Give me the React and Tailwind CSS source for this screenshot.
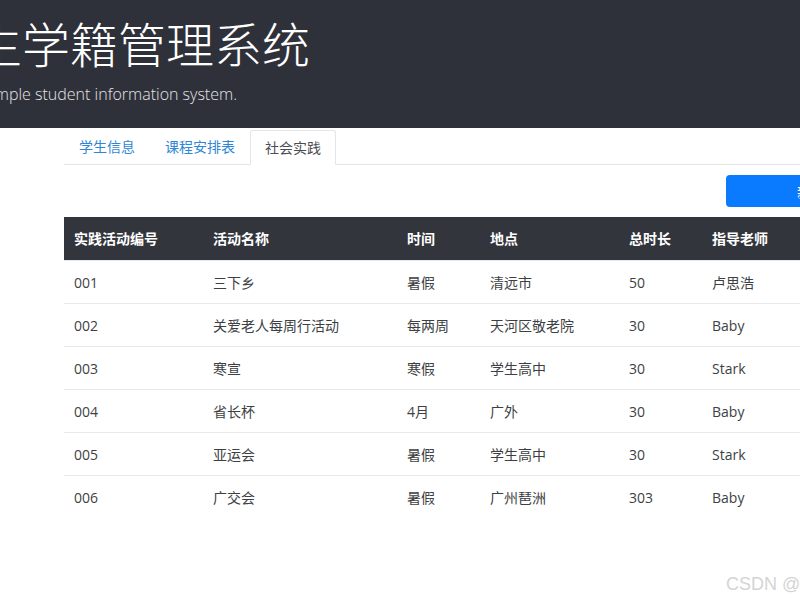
import React from 'react';

const rows = [
  ['001', '三下乡', '暑假', '清远市', '50', '卢思浩'],
  ['002', '关爱老人每周行活动', '每两周', '天河区敬老院', '30', 'Baby'],
  ['003', '寒宣', '寒假', '学生高中', '30', 'Stark'],
  ['004', '省长杯', '4月', '广外', '30', 'Baby'],
  ['005', '亚运会', '暑假', '学生高中', '30', 'Stark'],
  ['006', '广交会', '暑假', '广州琶洲', '303', 'Baby'],
];

const heads = ['实践活动编号', '活动名称', '时间', '地点', '总时长', '指导老师'];
const widths = ['w-[139px]', 'w-[194px]', 'w-[83px]', 'w-[139px]', 'w-[83px]', 'flex-1'];

const App = () => {
  return (
    <div
      className="relative w-[800px] h-[600px] overflow-hidden bg-white"
      style={{ fontFamily: '"Open Sans", "Noto Sans CJK SC", sans-serif' }}
    >
      {/* Jumbotron */}
      <header className="h-[128px] bg-[#2f313a] text-white pt-[15px]">
        <h1 className="ml-[-74px] text-[48px] leading-[60px] font-light whitespace-nowrap">
          学生学籍管理系统
        </h1>
        <p className="ml-[-30px] mt-[7px] text-[16px] leading-[24px] font-light text-[#e4e4e8] whitespace-nowrap">
          A simple student information system.
        </p>
      </header>

      {/* Content */}
      <div className="ml-[64px] w-[832px]">
        {/* Tabs */}
        <nav className="flex border-b border-[#e3e5e8] pt-[2px] text-[14px]">
          <a className="px-[15px] h-[34px] leading-[34px] text-[#2f86d6]">学生信息</a>
          <a className="px-[15px] h-[34px] leading-[34px] text-[#2f86d6]">课程安排表</a>
          <a className="px-[14px] h-[35px] leading-[33px] mb-[-1px] text-[#4a4d52] bg-white border border-[#e3e5e8] border-b-white rounded-t-[3px]">
            社会实践
          </a>
        </nav>

        {/* Toolbar */}
        <div className="flex justify-end mt-[10px] mb-[10px]">
          <button className="w-[170px] h-[32px] rounded-[4px] bg-[#0a7bff] text-white text-[14px]">新增</button>
        </div>

        {/* Table */}
        <div className="text-[14px]">
          <div className="flex h-[43px] items-center bg-[#33353d] text-white font-bold">
            {heads.map((h, i) => (
              <div key={h} className={`${widths[i]} pl-[10px]`}>{h}</div>
            ))}
          </div>
          {rows.map((r) => (
            <div key={r[0]} className="flex h-[43px] items-center border-t border-[#e6e8eb] first:border-t-0 text-[#3d3f44]">
              {r.map((c, i) => (
                <div key={i} className={`${widths[i]} pl-[10px] whitespace-nowrap`}>{c}</div>
              ))}
            </div>
          ))}
        </div>
      </div>

      {/* Watermark */}
      <div className="absolute left-[726px] top-[571px] text-[18px] text-[#d4d4d4] whitespace-nowrap" style={{ fontFamily: '"Liberation Sans", "Noto Sans CJK SC", sans-serif' }}>
        CSDN @李
      </div>
    </div>
  );
};

export default App;
